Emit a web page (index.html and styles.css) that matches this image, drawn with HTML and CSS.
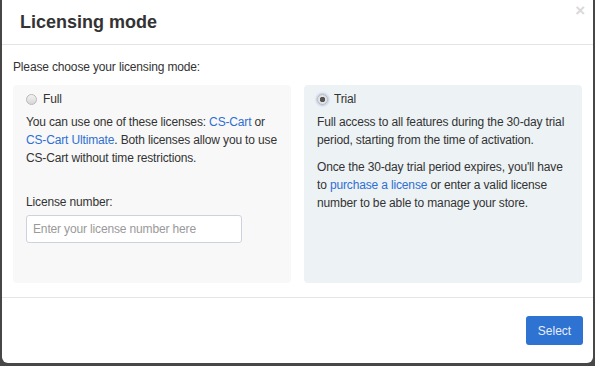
FILE: index.html
```html
<!DOCTYPE html>
<html lang="en">
  <head>
    <meta charset="UTF-8" />
    <title>Licensing mode</title>
    <link rel="stylesheet" href="styles.css">
  </head>
  <body>
    <div class="modal">
      <div class="modal-header">
        <h3 class="modal-title">Licensing mode</h3>
        <span class="close">&times;</span>
      </div>
      <div class="modal-body">
        <p class="intro">Please choose your licensing mode:</p>
        <div class="modes">
          <!-- full license -->
          <div class="mode mode-full">
            <label class="mode-label"><span class="radio"></span>Full</label>
            <p>You can use one of these licenses: <a href="#">CS-Cart</a> or <a href="#">CS-Cart Ultimate</a>. Both licenses allow you to use CS-Cart without time restrictions.</p>
            <label class="field-label">License number:</label>
            <input class="license-input" type="text" placeholder="Enter your license number here" />
          </div>
          <!-- trial -->
          <div class="mode mode-trial">
            <label class="mode-label"><span class="radio checked"></span>Trial</label>
            <p>Full access to all features during the 30-day trial period, starting from the time of activation.</p>
            <p>Once the 30-day trial period expires, you'll have to <a href="#">purchase a license</a> or enter a valid license number to be able to manage your store.</p>
          </div>
        </div>
      </div>
      <div class="modal-footer">
        <button class="btn-select">Select</button>
      </div>
    </div>
  </body>
</html>
```

FILE: styles.css
```css
* {
  box-sizing: border-box;
}

body {
  margin: 0;
  background-color: #474747;
  font-family: "Liberation Sans", Arial, sans-serif;
  font-size: 12px;
  letter-spacing: -0.15px;
  color: #333;
}

a {
  color: #2f6fd3;
  text-decoration: none;
}

/* modal window */
.modal {
  margin: -6px 2px 0 2px;
  height: 369px;
  background-color: white;
  border-radius: 6px;
  display: flex;
  flex-direction: column;
}

.modal-header {
  height: 51px;
  padding: 6px 8px 0 18px;
  border-bottom: 1px solid #e5e5e5;
  display: flex;
  align-items: center;
  justify-content: space-between;
}
.modal-title {
  margin: 0;
  font-size: 18px;
  font-weight: bold;
  letter-spacing: 0;
  color: #333;
}
.close {
  align-self: flex-start;
  margin-top: 4px;
  font-size: 17px;
  line-height: 14px;
  font-weight: bold;
  color: #d9d9d9;
}

.modal-body {
  padding: 0 11px;
  height: 253px;
  border-bottom: 1px solid #e5e5e5;
}
.intro {
  margin: 14px 0 10px 0;
  line-height: 16px;
}

.modes {
  display: flex;
  gap: 13px;
}
.mode {
  flex: 1;
  height: 198px;
  border-radius: 4px;
  padding: 5px 12px 5px 13px;
}
.mode-full {
  background-color: #f8f8f8;
}
.mode-trial {
  background-color: #edf2f5;
}
.mode p {
  margin: 0 0 9px 0;
  line-height: 18px;
}

.mode-label {
  display: flex;
  align-items: center;
  height: 18px;
  margin-bottom: 5px;
}
.radio {
  width: 11px;
  height: 11px;
  border-radius: 50%;
  border: 1px solid #b9b9b9;
  background: linear-gradient(#f2f2f2, #d7d7d7);
  margin-right: 6px;
  display: inline-block;
}
.radio.checked {
  background: radial-gradient(circle, #555 0 2.5px, #e4e4e4 3px);
  box-shadow: 0 0 2px 1px #b8c7ef;
}

.field-label {
  display: block;
  margin-top: 27px;
  line-height: 16px;
}
.license-input {
  margin-top: 5px;
  width: 216px;
  height: 28px;
  border: 1px solid #cdd3dd;
  border-radius: 3px;
  padding: 0 6px;
  font-family: "Liberation Sans", Arial, sans-serif;
  font-size: 12px;
  letter-spacing: -0.15px;
  background: white;
}
.license-input::placeholder {
  color: #9a9a9a;
}

.modal-footer {
  flex: 1;
  display: flex;
  justify-content: flex-end;
  align-items: flex-start;
  padding: 18px 10px 0 0;
}
.btn-select {
  width: 57px;
  height: 29px;
  border: none;
  border-radius: 3px;
  background-color: #2e72d2;
  color: #e8eefa;
  font-family: "Liberation Sans", Arial, sans-serif;
  font-size: 12px;
}
```
